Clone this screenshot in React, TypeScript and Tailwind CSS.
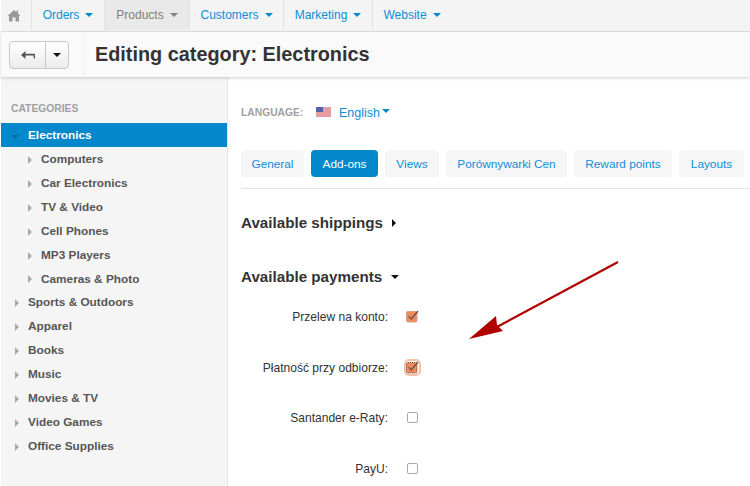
import React from "react";

const Caret = ({ c = "#0388cc", dir = "down" }: { c?: string; dir?: string }) => (
  <span
    className="inline-block"
    style={
      dir === "down"
        ? { borderLeft: "4px solid transparent", borderRight: "4px solid transparent", borderTop: `4px solid ${c}` }
        : { borderTop: "4px solid transparent", borderBottom: "4px solid transparent", borderLeft: `4px solid ${c}` }
    }
  />
);

const navItems: [string, number, boolean?, boolean?][] = [
  ["Orders", 73],
  ["Products", 85, true],
  ["Customers", 94],
  ["Marketing", 89],
  ["Website", 78, false, true],
];

const subCats = ["Computers", "Car Electronics", "TV & Video", "Cell Phones", "MP3 Players", "Cameras & Photo"];
const topCats = ["Sports & Outdoors", "Apparel", "Books", "Music", "Movies & TV", "Video Games", "Office Supplies"];
const tabs: [string, number, boolean?][] = [
  ["General", 63],
  ["Add-ons", 67, true],
  ["Views", 54],
  ["Porównywarki Cen", 121],
  ["Reward points", 98],
  ["Layouts", 65],
];

const Check = ({ focus }: { focus?: boolean }) => (
  <span
    className={
      focus
        ? "flex h-[17px] w-[17px] items-center justify-center rounded-[5px] border-2 border-[#f9bfa5] bg-white"
        : "flex h-[17px] w-[17px] items-center justify-center"
    }
  >
    <svg width="13" height="13" viewBox="0 0 13 13" className="shrink-0">
      <rect x="0.5" y="1.5" width="10.5" height="10.5" rx="1.5" fill="#f08a5d" stroke={focus ? "#5a3a2c" : "#dc9c80"} strokeDasharray={focus ? "1 1" : undefined} />
      <path d="M2.8 6.4 L5.2 9 L12 1" fill="none" stroke="#6a5048" strokeWidth="1.3" />
    </svg>
  </span>
);

const Empty = () => (
  <span className="flex h-[17px] w-[17px] items-center justify-center">
    <span className="block h-[11px] w-[11px] rounded-[2px] border border-[#a8a8a8] bg-white" />
  </span>
);

const payments: [string, React.ReactNode][] = [
  ["Przelew na konto:", <Check />],
  ["Płatność przy odbiorze:", <Check focus />],
  ["Santander e-Raty:", <Empty />],
  ["PayU:", <Empty />],
];

export default function App() {
  return (
    <div
      className="relative h-[486px] w-[750px] overflow-hidden bg-white pl-[1px]"
      style={{ fontFamily: '"Liberation Sans", Arial, sans-serif' }}
    >
      <nav className="flex h-[32px] items-stretch border-b border-[#e2e2e2] bg-[#f4f4f4] pb-[1px] text-[12px] leading-[30px]">
        <div className="flex w-[31px] items-center justify-center border-r border-[#e3e3e3] pr-[4px]">
          <svg width="14" height="13" viewBox="0 0 14 13" fill="#999">
            <path d="M7 1 L0.5 7 L2 7 L2 12.5 L5.5 12.5 L5.5 8.5 L8.5 8.5 L8.5 12.5 L12 12.5 L12 7 L13.5 7 L11 4.6 L11 1.5 L9.5 1.5 L9.5 3.2 Z" />
          </svg>
        </div>
        {navItems.map(([t, w, active, last]) => (
          <div
            key={t}
            className={`flex items-center justify-center gap-[6px] ${last ? "" : "border-r border-[#e3e3e3]"} ${active ? "bg-[#e9e9e9] text-[#808080]" : "text-[#0d8ed6]"}`}
            style={{ width: w }}
          >
            <span>{t}</span>
            <Caret c={active ? "#808080" : "#0388cc"} />
          </div>
        ))}
      </nav>
      <header className="relative z-10 flex h-[45px] items-center bg-[#fafafa] pl-[8px] shadow-[0_1px_3px_rgba(0,0,0,0.2)]">
        <div className="flex h-[28px] w-[60px] rounded-[4px] border border-[#c8c8c8] bg-gradient-to-b from-white to-[#ececec]">
          <div className="flex w-[36px] items-center justify-center border-r border-[#c8c8c8]">
            <svg width="14" height="10" viewBox="0 0 14 10" fill="#555">
              <path d="M0 5 L4.5 1 L4.5 3.8 L14 3.8 L14 8.5 L12.6 8.5 L12.6 5.6 L4.5 5.6 L4.5 9 Z" />
            </svg>
          </div>
          <div className="flex flex-1 items-center justify-center">
            <Caret c="#111" />
          </div>
        </div>
        <div className="ml-[14px] h-[44px] border-l border-[#f0f0f0]" />
        <h1 className="ml-[11px] pt-[1px] text-[19.85px] font-bold text-[#333]">Editing category: Electronics</h1>
      </header>
      <div className="flex h-[409px]">
        <aside className="w-[227px] shrink-0 border-r border-[#e6e6e6] bg-[#f5f5f5] pt-[25px] text-[11.8px] font-bold text-[#555]">
          <div className="mb-[7px] pl-[10px] text-[10.3px] leading-[14px] text-[#a0a0a0]">CATEGORIES</div>
          <div className="flex h-[24px] items-center bg-[#0388cc] pl-[10px] pt-[2px] text-white">
            <span className="w-[17px]">
              <Caret c="#046aa0" />
            </span>
            Electronics
          </div>
          {subCats.map((c) => (
            <div key={c} className="flex h-[23.9px] items-center pl-[27px] pt-[2px]">
              <span className="flex w-[13px]">
                <Caret c="#aaa" dir="right" />
              </span>
              {c}
            </div>
          ))}
          {topCats.map((c) => (
            <div key={c} className="flex h-[23.9px] items-center pl-[14px] pt-[2px]">
              <span className="flex w-[13px]">
                <Caret c="#aaa" dir="right" />
              </span>
              {c}
            </div>
          ))}
        </aside>
        <main className="flex-1 pl-[13px] pt-[28px]">
          <div className="flex h-[16px] items-center">
            <span className="w-[75px] text-[10.3px] font-bold text-[#a0a0a0]">LANGUAGE:</span>
            <svg width="15" height="10" viewBox="0 0 15 10" className="-mt-[2px]">
              <rect width="15" height="10" fill="#f2f2f2" />
              <path d="M0 1h15M0 3h15M0 5h15M0 7h15M0 9h15" stroke="#e0474c" strokeWidth="1" />
              <rect width="7" height="5" fill="#5560b0" />
            </svg>
            <span className="ml-[8px] text-[12.5px] text-[#0d8ed6]">English</span>
            <span className="ml-[2px] -mt-[4px] flex">
              <Caret />
            </span>
          </div>
          <div className="mt-[29px] flex h-[39px] gap-[7px] border-b border-[#e2e2e2]">
            {tabs.map(([t, w, active]) => (
              <div
                key={t}
                className={`flex h-[27px] items-center justify-center rounded-[4px] pt-[2px] text-[11.8px] ${active ? "bg-[#0388cc] text-white" : "bg-[#f6f6f6] text-[#0d8ed6]"}`}
                style={{ width: w }}
              >
                {t}
              </div>
            ))}
          </div>
          <h2 className="mt-[24px] flex h-[20px] items-center gap-[9px] text-[15.2px] font-bold text-[#333]">
            Available shippings <Caret c="#111" dir="right" />
          </h2>
          <h2 className="mt-[34px] flex h-[20px] items-center gap-[9px] text-[15.2px] font-bold text-[#333]">
            Available payments <Caret c="#111" />
          </h2>
          <div className="pt-[9px]">
            {payments.map(([label, box], i) => (
              <div key={i} className="flex h-[50.5px] items-start pt-[12px]">
                <span className="w-[147px] pt-[1px] text-right text-[12.05px] leading-[16px] text-[#333]">{label}</span>
                <span className="ml-[16px]">{box}</span>
              </div>
            ))}
          </div>
        </main>
      </div>
      <svg className="absolute left-[465px] top-[258px]" width="160" height="85" viewBox="0 0 160 85">
        <path d="M153 4 L30 70" stroke="#b00000" strokeWidth="2.2" fill="none" />
        <path d="M4 81 L31 58 L32 67 L38 73 Z" fill="#b00000" />
      </svg>
    </div>
  );
}
